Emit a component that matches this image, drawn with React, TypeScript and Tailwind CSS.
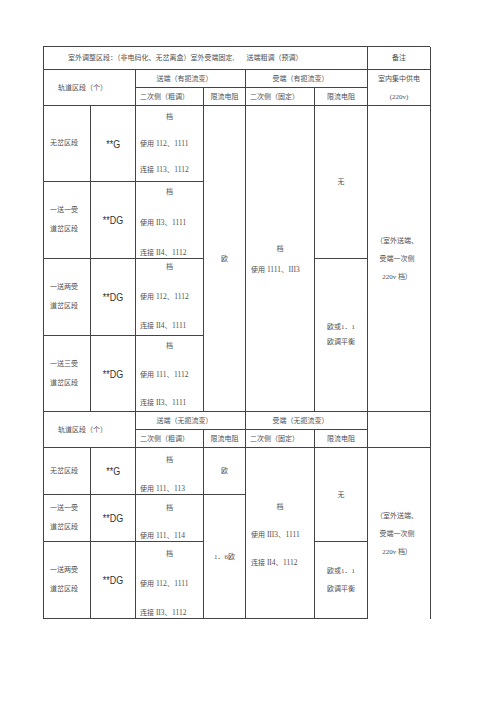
import React from "react";

const cjk = "font-['Liberation_Serif','Noto_Sans_CJK_SC',serif]";
const line = "border-[#444]";

function Cell({
  className = "",
  children,
  open = false,
}: {
  className?: string;
  children?: React.ReactNode;
  open?: boolean;
}) {
  return (
    <div
      className={`border-r ${open ? "" : "border-b"} ${line} text-[7px] leading-[10px] text-[#505050] ${className}`}
    >
      {children}
    </div>
  );
}

// "使用 112、1111" -> label + larger digits
function Use({ text }: { text: string }) {
  return (
    <span className="whitespace-nowrap">
      {text.slice(0, 2)}
      <span className="text-[7.5px]">{text.slice(2)}</span>
    </span>
  );
}

// 档 / 使用 / 连接
function Gear({
  className,
  lines,
}: {
  className: string;
  lines: string[];
}) {
  return (
    <Cell className={`flex flex-col justify-between px-[4px] ${className}`}>
      <span className="text-center">档</span>
      {lines.map((l) => (
        <Use key={l} text={l} />
      ))}
    </Cell>
  );
}

function Code({ className, text }: { className: string; text: string }) {
  return (
    <Cell className={`flex items-center justify-center ${className}`}>
      <span className="inline-block scale-x-[0.85] font-['Liberation_Sans_Narrow','Liberation_Sans',sans-serif] text-[10.5px] text-[#333]">
        {text}
      </span>
    </Cell>
  );
}

function Section({ className, lines }: { className: string; lines: string[] }) {
  return (
    <Cell className={`flex flex-col justify-center pl-[6px] leading-[19px] ${className}`}>
      {lines.map((l) => (
        <span key={l}>{l}</span>
      ))}
    </Cell>
  );
}

export default function App() {
  return (
    <div className={`min-h-[707px] bg-white pt-[46px] pl-[43px] ${cjk}`}>
      <div className={`grid w-[387px] grid-cols-[47px_45px_68px_42px_69px_53px_63px] grid-rows-[23px_18px_18px_76px_77px_77px_76px_18px_18px_47px_47px_77px] border-l border-t ${line}`}>
        {/* 表头一 */}
        <Cell className="col-start-1 col-span-6 row-start-1 flex items-center pl-[24px] whitespace-nowrap">
          室外调整区段：（非电码化、无岔离盒）室外受端固定,&nbsp;&nbsp;&nbsp;&nbsp;&nbsp;&nbsp;&nbsp;送端粗调（预调）
        </Cell>
        <Cell className="col-start-7 row-start-1 flex items-center justify-center">备注</Cell>

        <Cell className="col-start-1 col-span-2 row-start-2 row-span-2 flex items-center justify-center pr-[14px]">
          轨道区段（个）
        </Cell>
        <Cell className="col-start-3 col-span-2 row-start-2 flex items-center justify-center pr-[12px]">
          送端（有扼流变）
        </Cell>
        <Cell className="col-start-5 col-span-2 row-start-2 flex items-center justify-center pr-[12px]">
          受端（有扼流变）
        </Cell>
        <Cell className="col-start-7 row-start-2 row-span-2 flex flex-col items-center justify-center leading-[18px]">
          <span>室内集中供电</span>
          <span>(220v)</span>
        </Cell>
        <Cell className="col-start-3 row-start-3 flex items-center pl-[4px] whitespace-nowrap">二次侧（粗调）</Cell>
        <Cell className="col-start-4 row-start-3 flex items-center justify-center">限流电阻</Cell>
        <Cell className="col-start-5 row-start-3 flex items-center pl-[4px] whitespace-nowrap">二次侧（固定）</Cell>
        <Cell className="col-start-6 row-start-3 flex items-center justify-center">限流电阻</Cell>

        {/* 表一内容 */}
        <Section className="col-start-1 row-start-4" lines={["无岔区段"]} />
        <Code className="col-start-2 row-start-4" text="**G" />
        <Gear className="col-start-3 row-start-4 pt-[6px] pb-[6px]" lines={["使用 112、1111", "连接 113、1112"]} />

        <Section className="col-start-1 row-start-5" lines={["一送一受", "道岔区段"]} />
        <Code className="col-start-2 row-start-5" text="**DG" />
        <Gear className="col-start-3 row-start-5 pt-[5px] pb-[0px]" lines={["使用 II3、1111", "连接 II4、1112"]} />

        <Section className="col-start-1 row-start-6" lines={["一送两受", "道岔区段"]} />
        <Code className="col-start-2 row-start-6" text="**DG" />
        <Gear className="col-start-3 row-start-6 pt-[3px] pb-[4px]" lines={["使用 112、1112", "连接 II4、1111"]} />

        <Section className="col-start-1 row-start-7" lines={["一送三受", "道岔区段"]} />
        <Code className="col-start-2 row-start-7" text="**DG" />
        <Gear className="col-start-3 row-start-7 pt-[5px] pb-[3px]" lines={["使用 111、1112", "连接 II3、1111"]} />

        <Cell className="col-start-4 row-start-4 row-span-4 flex items-center justify-center">欧</Cell>
        <Cell className="col-start-5 row-start-4 row-span-4 flex flex-col justify-center gap-[11px] px-[5px] pt-[2px]">
          <span className="text-center">档</span>
          <Use text="使用 1111、III3" />
        </Cell>
        <Cell className="col-start-6 row-start-4 row-span-2 flex items-center justify-center">无</Cell>
        <Cell className="col-start-6 row-start-6 row-span-2 flex items-center justify-center">
          <div className="flex flex-col leading-[15px]">
            <span>欧或1．1</span>
            <span>欧调平衡</span>
          </div>
        </Cell>
        <Cell className="col-start-7 row-start-4 row-span-4 flex flex-col items-center justify-center leading-[18px] pr-[4px]">
          <span>（室外送端、</span>
          <span>受端一次侧</span>
          <span>220v 档）</span>
        </Cell>

        {/* 表头二 */}
        <Cell className="col-start-1 col-span-2 row-start-8 row-span-2 flex items-center justify-center pr-[14px]">
          轨道区段（个）
        </Cell>
        <Cell className="col-start-3 col-span-2 row-start-8 flex items-center justify-center pr-[12px]">
          送端（无扼流变）
        </Cell>
        <Cell className="col-start-5 col-span-2 row-start-8 flex items-center justify-center pr-[12px]">
          受端（无扼流变）
        </Cell>
        <Cell className="col-start-7 row-start-8 row-span-2" />
        <Cell className="col-start-3 row-start-9 flex items-center pl-[4px] whitespace-nowrap">二次侧（粗调）</Cell>
        <Cell className="col-start-4 row-start-9 flex items-center justify-center">限流电阻</Cell>
        <Cell className="col-start-5 row-start-9 flex items-center pl-[4px] whitespace-nowrap">二次侧（固定）</Cell>
        <Cell className="col-start-6 row-start-9 flex items-center justify-center">限流电阻</Cell>

        {/* 表二内容 */}
        <Section className="col-start-1 row-start-10" lines={["无岔区段"]} />
        <Code className="col-start-2 row-start-10" text="**G" />
        <Gear className="col-start-3 row-start-10 pt-[7px] pb-[0px]" lines={["使用 111、113"]} />
        <Cell className="col-start-4 row-start-10 flex items-center justify-center">欧</Cell>

        <Section className="col-start-1 row-start-11" lines={["一送一受", "道岔区段"]} />
        <Code className="col-start-2 row-start-11" text="**DG" />
        <Gear className="col-start-3 row-start-11 pt-[8px] pb-[0px]" lines={["使用 111、114"]} />

        <Section className="col-start-1 row-start-12" lines={["一送两受", "道岔区段"]} />
        <Code className="col-start-2 row-start-12" text="**DG" />
        <Gear className="col-start-3 row-start-12 pt-[7px] pb-[0px]" lines={["使用 112、1111", "连接 II3、1112"]} />

        <Cell className="col-start-4 row-start-11 row-span-2 flex items-center justify-center">1．6欧</Cell>
        <Cell className="col-start-5 row-start-10 row-span-3 flex flex-col justify-center gap-[18px] px-[5px] pt-[3px]">
          <span className="text-center">档</span>
          <Use text="使用 III3、1111" />
          <Use text="连接 II4、1112" />
        </Cell>
        <Cell className="col-start-6 row-start-10 row-span-2 flex items-center justify-center">无</Cell>
        <Cell className="col-start-6 row-start-12 flex items-center justify-center">
          <div className="flex flex-col leading-[18px]">
            <span>欧或1．1</span>
            <span>欧调平衡</span>
          </div>
        </Cell>
        <Cell open className="col-start-7 row-start-10 row-span-3 flex flex-col items-center justify-center leading-[18px] pr-[4px]">
          <span>（室外送端、</span>
          <span>受端一次侧</span>
          <span>220v 档）</span>
        </Cell>
      </div>
    </div>
  );
}
